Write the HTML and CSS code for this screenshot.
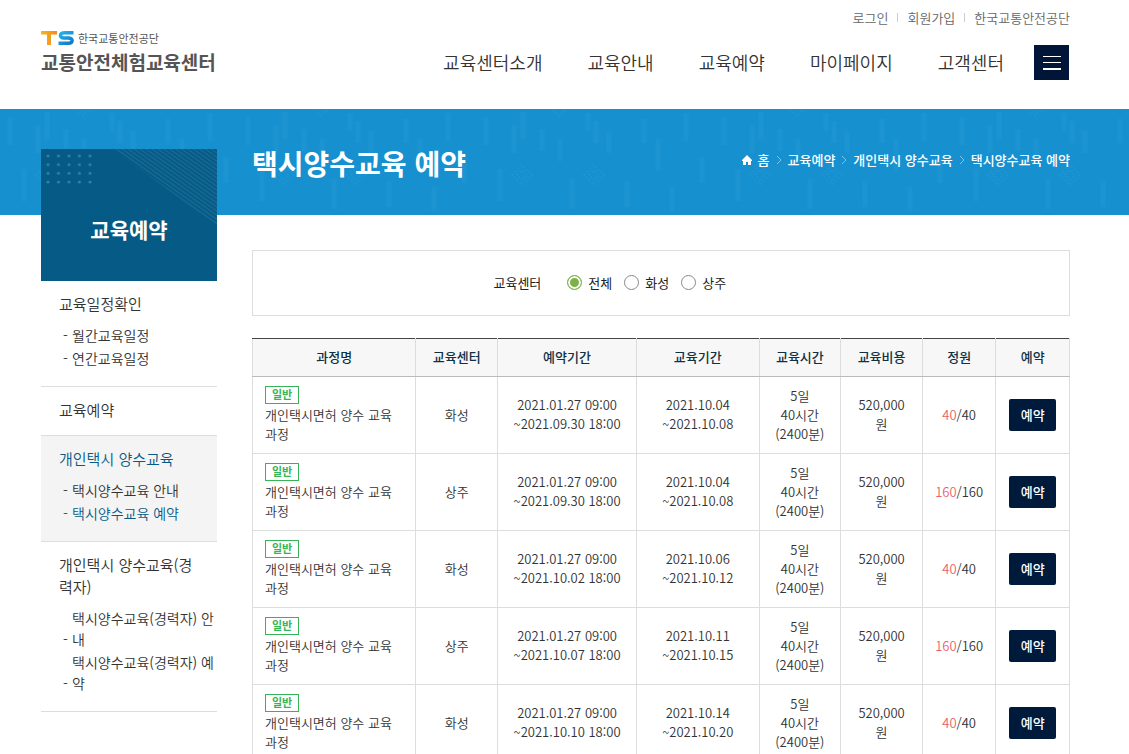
FILE: index.html
```html
<!DOCTYPE html>
<html lang="ko">
<head>
  <meta charset="UTF-8" />
  <meta name="viewport" content="width=device-width, initial-scale=1.0" />
  <title>택시양수교육 예약</title>
  <link rel="stylesheet" href="styles.css">
</head>
<body>
  <header class="header">
    <a href="#" class="logo">
      <span class="logo-top">
        <svg class="logo-mark" width="34" height="16" viewBox="0 0 34 16" aria-hidden="true">
          <defs>
            <linearGradient id="gradT" x1="0" y1="0" x2="1" y2="0">
              <stop offset="0" stop-color="#f9b51c" />
              <stop offset="1" stop-color="#f08a1d" />
            </linearGradient>
            <linearGradient id="gradS" x1="0" y1="0" x2="1" y2="1">
              <stop offset="0" stop-color="#2bb5e8" />
              <stop offset="1" stop-color="#0b78c8" />
            </linearGradient>
          </defs>
          <path d="M0 1H16V4.500H10V15H6V4.500H0Z" fill="url(#gradT)" />
          <path d="M32.500 2.700H24C18 2.700 18 8 23 8H27.500C32.500 8 32.500 13.300 27 13.300H17.500" fill="none" stroke="url(#gradS)" stroke-width="3.400" />
        </svg>
        <span class="logo-org">한국교통안전공단</span>
      </span>
      <span class="logo-name">교통안전체험교육센터</span>
    </a>
    <div class="header-right">
      <ul class="util">
        <li><a href="#">로그인</a></li>
        <li><a href="#">회원가입</a></li>
        <li><a href="#">한국교통안전공단</a></li>
      </ul>
      <nav class="gnb">
        <a href="#">교육센터소개</a>
        <a href="#">교육안내</a>
        <a href="#">교육예약</a>
        <a href="#">마이페이지</a>
        <a href="#">고객센터</a>
        <button type="button" class="menu-btn" aria-label="전체메뉴">
          <span></span><span></span><span></span>
        </button>
      </nav>
    </div>
  </header>

  <div class="wrap">
    <aside class="side">
      <div class="side-title">
        <svg class="side-deco" width="176" height="80" viewBox="0 0 176 80" aria-hidden="true">
          <defs>
            <pattern id="dots" x="2" y="2" width="10.500" height="8.700" patternUnits="userSpaceOnUse">
              <circle cx="5" cy="5" r="1.400" fill="#3185ae" />
            </pattern>
            <pattern id="lines" width="5" height="3.400" patternUnits="userSpaceOnUse" patternTransform="rotate(35)">
              <path d="M0 1H5" stroke="#1f7099" stroke-width="1" />
            </pattern>
          </defs>
          <rect x="2" y="2" width="52" height="34" fill="url(#dots)" />
          <path d="M72 0H176V77Z" fill="url(#lines)" />
        </svg>
        <h2>교육예약</h2>
      </div>
      <ul class="lnb">
        <li>
          <a href="#">교육일정확인</a>
          <ul>
            <li><a href="#">월간교육일정</a></li>
            <li><a href="#">연간교육일정</a></li>
          </ul>
        </li>
        <li><a href="#">교육예약</a></li>
        <li class="on">
          <a href="#">개인택시 양수교육</a>
          <ul>
            <li><a href="#">택시양수교육 안내</a></li>
            <li class="current"><a href="#">택시양수교육 예약</a></li>
          </ul>
        </li>
        <li>
          <a href="#">개인택시 양수교육(경력자)</a>
          <ul>
            <li><a href="#">택시양수교육(경력자) 안내</a></li>
            <li><a href="#">택시양수교육(경력자) 예약</a></li>
          </ul>
        </li>
      </ul>
    </aside>

    <main class="main">
      <div class="page-head">
        <h1>택시양수교육 예약</h1>
        <nav class="path">
          <svg width="10" height="10" viewBox="0 0 10 10" aria-hidden="true"><path d="M5 0L10 5V6H9V10H6V7H4V10H1V6H0V5Z" fill="#fff" /></svg>
          <a href="#">홈</a>
          <svg class="arrow" width="6" height="10" viewBox="0 0 6 10" aria-hidden="true"><path d="M1 1L5 5L1 9" /></svg>
          <a href="#">교육예약</a>
          <svg class="arrow" width="6" height="10" viewBox="0 0 6 10" aria-hidden="true"><path d="M1 1L5 5L1 9" /></svg>
          <a href="#">개인택시 양수교육</a>
          <svg class="arrow" width="6" height="10" viewBox="0 0 6 10" aria-hidden="true"><path d="M1 1L5 5L1 9" /></svg>
          <a href="#">택시양수교육 예약</a>
        </nav>
      </div>

      <fieldset class="filter">
        <span class="filter-title" id="centerLabel">교육센터</span>
        <div class="radios" role="radiogroup" aria-labelledby="centerLabel">
          <label><input type="radio" name="center" checked />전체</label>
          <label><input type="radio" name="center" />화성</label>
          <label><input type="radio" name="center" />상주</label>
        </div>
      </fieldset>

      <table class="list">
        <colgroup>
          <col class="w20"><col class="w10"><col class="w17"><col class="w15">
          <col class="w10"><col class="w10"><col class="w9"><col class="w9">
        </colgroup>
        <thead>
          <tr>
            <th>과정명</th>
            <th>교육센터</th>
            <th>예약기간</th>
            <th>교육기간</th>
            <th>교육시간</th>
            <th>교육비용</th>
            <th>정원</th>
            <th>예약</th>
          </tr>
        </thead>
        <tbody>
          <tr>
            <td class="course"><span class="badge">일반</span><br>개인택시면허 양수 교육과정</td>
            <td>화성</td>
            <td>2021.01.27 09:00<br>~2021.09.30 18:00</td>
            <td>2021.10.04<br>~2021.10.08</td>
            <td>5일<br>40시간<br>(2400분)</td>
            <td>520,000원</td>
            <td><span class="left">40</span>/40</td>
            <td><button type="button" class="btn">예약</button></td>
          </tr>
          <tr>
            <td class="course"><span class="badge">일반</span><br>개인택시면허 양수 교육과정</td>
            <td>상주</td>
            <td>2021.01.27 09:00<br>~2021.09.30 18:00</td>
            <td>2021.10.04<br>~2021.10.08</td>
            <td>5일<br>40시간<br>(2400분)</td>
            <td>520,000원</td>
            <td><span class="left">160</span>/160</td>
            <td><button type="button" class="btn">예약</button></td>
          </tr>
          <tr>
            <td class="course"><span class="badge">일반</span><br>개인택시면허 양수 교육과정</td>
            <td>화성</td>
            <td>2021.01.27 09:00<br>~2021.10.02 18:00</td>
            <td>2021.10.06<br>~2021.10.12</td>
            <td>5일<br>40시간<br>(2400분)</td>
            <td>520,000원</td>
            <td><span class="left">40</span>/40</td>
            <td><button type="button" class="btn">예약</button></td>
          </tr>
          <tr>
            <td class="course"><span class="badge">일반</span><br>개인택시면허 양수 교육과정</td>
            <td>상주</td>
            <td>2021.01.27 09:00<br>~2021.10.07 18:00</td>
            <td>2021.10.11<br>~2021.10.15</td>
            <td>5일<br>40시간<br>(2400분)</td>
            <td>520,000원</td>
            <td><span class="left">160</span>/160</td>
            <td><button type="button" class="btn">예약</button></td>
          </tr>
          <tr>
            <td class="course"><span class="badge">일반</span><br>개인택시면허 양수 교육과정</td>
            <td>화성</td>
            <td>2021.01.27 09:00<br>~2021.10.10 18:00</td>
            <td>2021.10.14<br>~2021.10.20</td>
            <td>5일<br>40시간<br>(2400분)</td>
            <td>520,000원</td>
            <td><span class="left">40</span>/40</td>
            <td><button type="button" class="btn">예약</button></td>
          </tr>
        </tbody>
      </table>
    </main>
  </div>
</body>
</html>
```
FILE: styles.css
```css
* {
  box-sizing: border-box;
}
body {
  margin: 0;
  font-family: 'Noto Sans CJK KR', 'Noto Sans', sans-serif;
  font-size: 13px;
  font-weight: 350;
  line-height: 19px;
  color: #333;
  background: #fff;
  word-break: break-all;
}
ul {
  list-style: none;
  margin: 0;
  padding: 0;
}
a {
  color: inherit;
  text-decoration: none;
}
h1, h2 {
  margin: 0;
}
button {
  font-family: inherit;
  border: 0;
  padding: 0;
  cursor: pointer;
}

/* header */
.header {
  display: flex;
  justify-content: space-between;
  height: 109px;
  padding: 0 59px 0 41px;
}
.logo {
  display: flex;
  flex-direction: column;
  padding-top: 29px;
  color: #555;
}
.logo-top {
  display: flex;
  align-items: center;
  gap: 3px;
  height: 18px;
}
.logo-org {
  font-size: 11px;
  font-weight: 400;
}
.logo-name {
  font-size: 19px;
  font-weight: 700;
  line-height: 30px;
}
.util {
  display: flex;
  justify-content: flex-end;
  padding-top: 8px;
  color: #666;
}
.util li {
  display: flex;
  align-items: center;
}
.util li + li::before {
  content: '';
  width: 1px;
  height: 9px;
  margin: 0 9px;
  background: #ccc;
}
.gnb {
  display: flex;
  align-items: center;
  gap: 45px;
  margin: 18px 1px 0 0;
  font-size: 18px;
  line-height: 26px;
}
.gnb a {
  padding-bottom: 2px;
}
.menu-btn {
  display: flex;
  flex-direction: column;
  align-items: center;
  justify-content: center;
  gap: 5px;
  width: 35px;
  height: 35px;
  margin-left: -15px;
  background: #001538;
}
.menu-btn span {
  width: 18px;
  height: 1px;
  background: #fff;
}
.menu-btn span:last-child {
  height: 2px;
}

/* blue band behind the page title */
.wrap {
  display: flex;
  gap: 35px;
  padding: 0 59px 0 41px;
  background:
    url("data:image/svg+xml,%3Csvg xmlns='http://www.w3.org/2000/svg' width='238' height='106'%3E%3Crect width='238' height='106' fill='%231690cf'/%3E%3Cg stroke='%232b9cd8' stroke-opacity='.3' stroke-width='5'%3E%3Cpath d='M10 8V36M24 60V92M38 16V44M47 3V30M66 20V42M84 30V52M96 70V100M112 4V22M120 12V34M133 22V44M151 72V98M168 10V34M182 30V62M196 78V102M210 4V32M226 48V74'/%3E%3C/g%3E%3Cg fill='none' stroke='%232b9cd8' stroke-opacity='.35' stroke-width='2' stroke-dasharray='2 2'%3E%3Cpath d='M36 66l10-10l10 10l-10 10zM41 66l5-5l5 5l-5 5zM108 66l10-10l10 10l-10 10zM113 66l5-5l5 5l-5 5zM76 0l7 7l7-7'/%3E%3C/g%3E%3C/svg%3E") repeat-x;
}

/* sidebar */
.side {
  flex: 0 0 176px;
  padding-top: 40px;
}
.side-title {
  position: relative;
  height: 132px;
  padding-top: 65px;
  background: #055b86;
  color: #fff;
  text-align: center;
}
.side-deco {
  position: absolute;
  top: 0;
  left: 0;
}
.side-title h2 {
  font-size: 21px;
  font-weight: 700;
  line-height: 30px;
}
.lnb > li {
  padding: 12px 0 14px;
  border-bottom: 1px solid #ddd;
}
.lnb > li > a {
  display: block;
  padding: 0 20px 0 18px;
  font-size: 15px;
  line-height: 22px;
}
.lnb ul {
  display: flex;
  flex-direction: column;
  gap: 2px;
  padding: 10px 0 3px 22px;
  font-size: 14px;
  line-height: 21px;
}
.lnb ul li {
  display: flex;
  align-items: flex-end;
}
.lnb ul li::before {
  content: '-';
  flex: 0 0 9px;
}
.lnb .on {
  background: #f4f4f4;
}
.lnb .on > a,
.lnb .current {
  color: #055b86;
}

/* content */
.main {
  flex: 1;
  min-width: 0;
}
.page-head {
  display: flex;
  justify-content: space-between;
  height: 106px;
  color: #fff;
}
.page-head h1 {
  padding-top: 33px;
  font-size: 28px;
  font-weight: 700;
  line-height: 42px;
}
.path {
  display: flex;
  align-items: center;
  gap: 6px;
  height: 19px;
  margin-top: 41px;
  font-weight: 500;
}
.arrow {
  fill: none;
  stroke: #7cc3ea;
}
.filter {
  display: flex;
  align-items: center;
  gap: 26px;
  height: 66px;
  margin: 35px 0 22px;
  padding: 0 0 2px 29.4%;
  border: 1px solid #ddd;
  font-weight: 400;
  color: #222;
}
.radios {
  display: flex;
  gap: 12px;
}
.radios label {
  display: flex;
  align-items: center;
  gap: 6px;
}
.radios input {
  appearance: none;
  width: 15px;
  height: 15px;
  margin: 0;
  border: 1px solid #888;
  border-radius: 50%;
  background: #fff;
}
.radios input:checked {
  border-color: #7db249;
  background: #7db249;
  box-shadow: inset 0 0 0 2px #fff;
}

.list {
  width: 100%;
  table-layout: fixed;
  border-collapse: collapse;
}
.w20 { width: 20%; }
.w17 { width: 17%; }
.w15 { width: 15%; }
.w10 { width: 10%; }
.w9 { width: 9%; }
.list th,
.list td {
  border: 1px solid #ddd;
  text-align: center;
}
.list th {
  height: 38px;
  padding: 0 0 2px;
  border-top-color: #444;
  border-bottom-color: #bbb;
  background: #f7f7f7;
  color: #0f3144;
  font-weight: 500;
}
.list td {
  height: 77px;
  padding: 8px 12px 10px;
}
.list td:last-child {
  padding: 9px 12px;
}
.list .course {
  text-align: left;
}
.badge {
  display: inline-block;
  width: 34px;
  height: 18px;
  border: 1px solid #35b558;
  color: #35b558;
  font-size: 11px;
  font-weight: 700;
  line-height: 15px;
  text-align: center;
  vertical-align: top;
}
.left {
  color: #ea5f6d;
}
.btn {
  width: 47px;
  height: 32px;
  border-radius: 2px;
  background: #001a3c;
  color: #fff;
  font-size: 13px;
  font-weight: 500;
  line-height: 19px;
  padding-bottom: 2px;
}
```
